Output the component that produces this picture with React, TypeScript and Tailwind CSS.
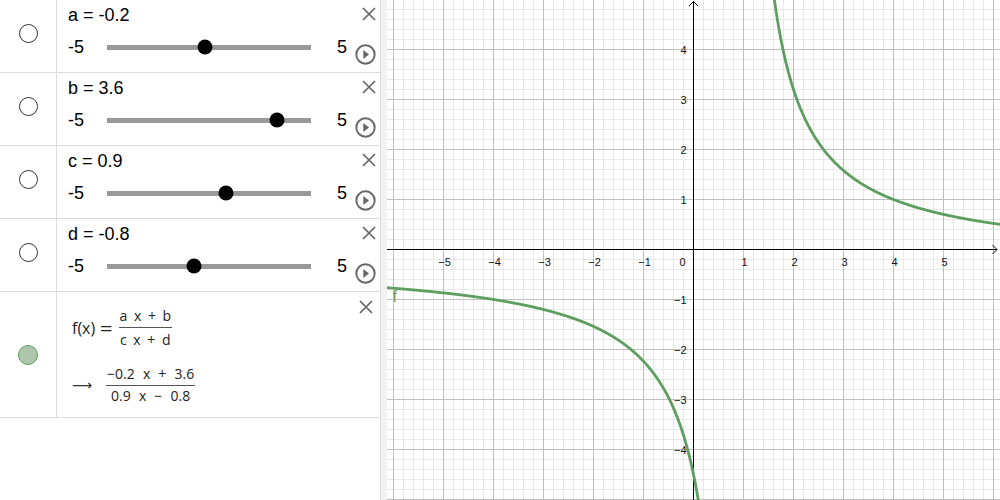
import React from 'react';

const sliders = [
  { name: 'a', value: -0.2 },
  { name: 'b', value: 3.6 },
  { name: 'c', value: 0.9 },
  { name: 'd', value: -0.8 },
];

const GREEN = '#5e9e5e';

function CloseIcon({ className = '' }: { className?: string }) {
  return (
    <svg width="14" height="14" viewBox="0 0 14 14" className={`shrink-0 ${className}`}>
      <path d="M1 1 L13 13 M13 1 L1 13" stroke="#666" strokeWidth="1.7" fill="none" />
    </svg>
  );
}

function PlayIcon({ className = '' }: { className?: string }) {
  return (
    <svg width="21" height="21" viewBox="0 0 21 21" className={`shrink-0 ${className}`}>
      <circle cx="10.5" cy="10.5" r="9.2" stroke="#666" strokeWidth="1.9" fill="none" />
      <path d="M8.3 6 L14 10.5 L8.3 15 Z" fill="#666" />
    </svg>
  );
}

function SliderRow({ name, value }: { name: string; value: number }) {
  // knob centre inside the 204px track, keeping half a knob at each end
  const knob = 7.5 + ((value + 5) / 10) * 189;
  return (
    <div className="flex h-[73px] border-b border-[#dcdcdc]">
      <div className="w-[57px] shrink-0 border-r border-[#dcdcdc] flex justify-center pt-[24px]">
        <div className="w-[19px] h-[19px] rounded-full border border-[#333]" />
      </div>
      <div className="flex-1 pl-[11px] pr-[7px] pt-[3px] text-[18px] text-black">
        <div className="flex items-center justify-between h-[24px] leading-[24px]">
          <span>
            {name} = {value.toFixed(1)}
          </span>
          <CloseIcon className="-mt-[2px]" />
        </div>
        <div className="flex items-center h-[24px] mt-[8px] leading-[24px]">
          <span className="w-[39px] shrink-0">-5</span>
          <div className="relative w-[204px] h-[5px] bg-[#999] shrink-0">
            <div
              className="absolute top-1/2 w-[15px] h-[15px] -translate-x-1/2 -translate-y-1/2 rounded-full bg-black"
              style={{ left: knob }}
            />
          </div>
          <span className="ml-[26px] shrink-0">5</span>
          <PlayIcon className="ml-[8px] mt-[15px]" />
        </div>
      </div>
    </div>
  );
}

function Fraction({
  num,
  den,
  spacing,
  gapTop,
  gapBottom,
}: {
  num: string;
  den: string;
  spacing: string;
  gapTop: string;
  gapBottom: string;
}) {
  return (
    <div className={`inline-flex flex-col items-stretch text-[14px] leading-[16px] ${spacing}`}>
      <span className={`text-center px-[1px] ${gapTop}`}>{num}</span>
      <div className="h-px bg-[#555]" />
      <span className={`text-center px-[1px] ${gapBottom}`}>{den}</span>
    </div>
  );
}

function FunctionRow() {
  return (
    <div className="flex h-[126px] border-b border-[#dcdcdc]">
      <div className="w-[57px] shrink-0 border-r border-[#dcdcdc] flex items-center justify-center">
        <div className="w-[20px] h-[20px] rounded-full bg-[#adc6ad] border border-[#5e9e5e]" />
      </div>
      <div className="flex-1 pl-[15px] pr-[7px] flex flex-col font-['Open_Sans','Noto_Sans',sans-serif] text-[#222]">
        <div className="flex justify-between items-start">
          <div className="flex items-center mt-[16px]">
            <span className="text-[16px] leading-[20px]">f(x)</span>
            <span className="text-[18px] leading-[20px] ml-[6px] mr-[7px] scale-x-125">=</span>
            <Fraction num="a x + b" den="c x + d" spacing="[word-spacing:3px]" gapTop="pb-[3px]" gapBottom="pt-[4px]" />
          </div>
          <CloseIcon className="mt-[8px]" />
        </div>
        <div className="flex items-center mt-[13px]">
          <span className="text-[14px] leading-[20px] font-['DejaVu_Sans',sans-serif] text-[#333] mt-[4px]">⟶</span>
          <div className="ml-[14px]">
            <Fraction num="−0.2 x + 3.6" den="0.9 x − 0.8" spacing="[word-spacing:4.5px]" gapTop="pb-[3px]" gapBottom="pt-[2px]" />
          </div>
        </div>
      </div>
    </div>
  );
}

function Graph() {
  const W = 613;
  const H = 500;
  const ox = 306.5;
  const oy = 249.5;
  const u = 50;

  const minorX: number[] = [];
  const majorX: number[] = [];
  for (let k = -40; k <= 40; k++) {
    const x = ox + k * 10;
    if (x < 0 || x > W || k === 0) continue;
    if (k % 5 === 0) majorX.push(x);
    else minorX.push(x);
  }
  const minorY: number[] = [];
  const majorY: number[] = [];
  for (let k = -40; k <= 40; k++) {
    const y = oy + k * 10;
    if (y < 0 || y > H || k === 0) continue;
    if (k % 5 === 0) majorY.push(y);
    else minorY.push(y);
  }

  const f = (x: number) => (-0.2 * x + 3.6) / (0.9 * x - 0.8);
  const asym = 0.8 / 0.9;
  const branch = (x0: number, x1: number) => {
    const pts: string[] = [];
    const n = 3000;
    for (let i = 0; i <= n; i++) {
      const x = x0 + ((x1 - x0) * i) / n;
      const py = oy - u * f(x);
      if (py < -200 || py > 700) continue;
      pts.push(`${(ox + u * x).toFixed(2)},${py.toFixed(2)}`);
    }
    return 'M' + pts.join(' L');
  };
  const left = branch(-6.3, asym - 0.0005);
  const right = branch(asym + 0.0005, 6.3);

  const xLabels = [-5, -4, -3, -2, -1, 1, 2, 3, 4, 5];
  const yLabels = [-4, -3, -2, -1, 1, 2, 3, 4];
  const fmt = (n: number) => (n < 0 ? `−${-n}` : `${n}`);

  return (
    <svg width={W} height={H} viewBox={`0 0 ${W} ${H}`} className="block shrink-0">
      <rect width={W} height={H} fill="#fff" />
      {minorX.map((x) => (
        <line key={`mx${x}`} x1={x} y1={0} x2={x} y2={H} stroke="#e8e8e8" strokeWidth="1" />
      ))}
      {minorY.map((y) => (
        <line key={`my${y}`} x1={0} y1={y} x2={W} y2={y} stroke="#e8e8e8" strokeWidth="1" />
      ))}
      {majorX.map((x) => (
        <line key={`Mx${x}`} x1={x} y1={0} x2={x} y2={H} stroke="#c0c0c0" strokeWidth="1" />
      ))}
      {majorY.map((y) => (
        <line key={`My${y}`} x1={0} y1={y} x2={W} y2={y} stroke="#c0c0c0" strokeWidth="1" />
      ))}

      {/* axes */}
      <line x1={0} y1={oy} x2={610} y2={oy} stroke="#000" strokeWidth="1" />
      <line x1={ox} y1={1} x2={ox} y2={H} stroke="#000" strokeWidth="1" />
      <polyline points={`605.5,${oy - 4.5} 610,${oy} 605.5,${oy + 4.5}`} fill="none" stroke="#000" strokeWidth="1" />
      <polyline points={`${ox - 4.5},6 ${ox},1.5 ${ox + 4.5},6`} fill="none" stroke="#000" strokeWidth="1" />

      <g fontFamily="'Liberation Sans', Arial, sans-serif" fontSize="11" fill="#111">
        {xLabels.map((n) => (
          <text key={`xl${n}`} x={ox + u * n + 1} y={265.5} textAnchor="middle">
            {fmt(n)}
          </text>
        ))}
        <text x={ox - 8} y={265.5} textAnchor="end">
          0
        </text>
        {yLabels.map((n) => (
          <text key={`yl${n}`} x={ox - 7} y={oy - u * n + 4.5} textAnchor="end">
            {fmt(n)}
          </text>
        ))}
      </g>

      <path d={left} fill="none" stroke={GREEN} strokeWidth="2.8" strokeLinejoin="round" />
      <path d={right} fill="none" stroke={GREEN} strokeWidth="2.8" strokeLinejoin="round" />
      <text x={5.5} y={302} fontFamily="'Liberation Sans', Arial, sans-serif" fontSize="16" fill={GREEN}>
        f
      </text>
    </svg>
  );
}

export default function App() {
  return (
    <div className="w-[1000px] h-[500px] flex overflow-hidden bg-white font-['Liberation_Sans',Arial,sans-serif]">
      <div className="w-[381px] shrink-0 border-r border-[#dcdcdc] bg-white">
        {sliders.map((s) => (
          <SliderRow key={s.name} name={s.name} value={s.value} />
        ))}
        <FunctionRow />
      </div>
      <div className="w-[6px] shrink-0 bg-[#f2f2f2]" />
      <Graph />
    </div>
  );
}
